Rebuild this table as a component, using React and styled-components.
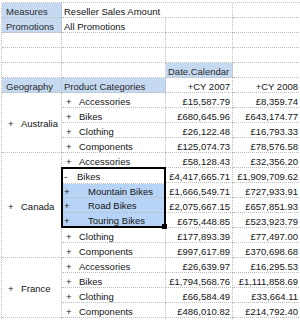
import React from "react";
import styled, { createGlobalStyle } from "styled-components";

const LINE = "#bdbdbd";
const HEAD = "#c5d9f1";
const SEL = "#b7d3f5";

const GlobalStyle = createGlobalStyle`
  html, body { margin: 0; padding: 0; background: #fff; }
  body { font-family: "Liberation Sans", Arial, sans-serif; }
`;

const Sheet = styled.div`
  display: grid;
  grid-template-columns: 60px 104px 67px 68px;
  grid-auto-rows: 15px;
  margin: 2px 0 0 1px;
  border-top: 1px dotted ${LINE};
  border-left: 1px dotted ${LINE};
  font-size: 9.5px;
  color: #141414;
  background: #fff;
`;

const Cell = styled.div`
  box-sizing: border-box;
  display: flex;
  align-items: center;
  justify-content: ${(p) => (p.$right ? "flex-end" : "flex-start")};
  padding: 2px ${(p) => (p.$right ? 2 : 0)}px 0 ${(p) => p.$pad ?? 2}px;
  border-right: ${(p) => (p.$noRight ? "1px solid transparent" : `1px dotted ${LINE}`)};
  border-bottom: 1px dotted ${LINE};
  background: ${(p) => p.$fill || "transparent"};
  color: ${(p) => (p.$head ? "#2a2a2a" : "#141414")};
  white-space: nowrap;
  overflow: ${(p) => (p.$spill ? "visible" : "hidden")};
  grid-row: ${(p) => (p.$span ? `span ${p.$span}` : "auto")};
`;

const Toggle = styled.span`
  display: inline-block;
  flex: none;
  width: ${(p) => p.$w}px;
`;

const Selection = styled.div`
  position: relative;
  grid-row: span 4;
  margin: -1px 0 0 -1px;
  border: 2px solid #000;
  display: flex;
  flex-direction: column;
  background: #fff;
`;

const SelRow = styled.div`
  flex: 1;
  display: flex;
  align-items: center;
  padding: 2px 0 0 1px;
  white-space: nowrap;
  overflow: hidden;
  background: ${(p) => (p.$fill ? SEL : "#fff")};
  border-bottom: ${(p) => (p.$last ? "none" : `1px dotted ${LINE}`)};
`;

const Handle = styled.span`
  position: absolute;
  right: -4px;
  bottom: -4px;
  width: 5px;
  height: 5px;
  background: #000;
  border: 1px solid #fff;
  border-width: 0 1px 1px 0;
`;

const gbp = (v) => "\u00a3" + v;

const data = [
  {
    geo: "Australia",
    rows: [
      ["Accessories", "15,587.79", "8,359.74"],
      ["Bikes", "680,645.96", "643,174.77"],
      ["Clothing", "26,122.48", "16,793.33"],
      ["Components", "125,074.73", "78,576.58"],
    ],
  },
  {
    geo: "Canada",
    rows: [
      ["Accessories", "58,128.43", "32,356.20"],
      ["Bikes", "4,417,665.71", "1,909,709.62", "open"],
      ["Mountain Bikes", "1,666,549.71", "727,933.91", "child"],
      ["Road Bikes", "2,075,667.15", "657,851.93", "child"],
      ["Touring Bikes", "675,448.85", "523,923.79", "child"],
      ["Clothing", "177,893.39", "77,497.00"],
      ["Components", "997,617.89", "370,698.68"],
    ],
  },
  {
    geo: "France",
    rows: [
      ["Accessories", "26,639.97", "16,295.53"],
      ["Bikes", "1,794,568.76", "1,111,858.69"],
      ["Clothing", "66,584.49", "33,664.11"],
      ["Components", "486,010.82", "214,792.40"],
    ],
  },
];

const Values = ({ a, b }) => (
  <>
    <Cell $right>{gbp(a)}</Cell>
    <Cell $right>{gbp(b)}</Cell>
  </>
);

const Empty = ({ n }) =>
  Array.from({ length: n }, (_, i) => <Cell key={i} />);

function Group({ geo, rows }) {
  const out = [
    <Cell key="geo" $span={rows.length} $pad={6}>
      <Toggle $w={13}>+</Toggle>
      {geo}
    </Cell>,
  ];
  let i = 0;
  while (i < rows.length) {
    const [name, a, b, kind] = rows[i];
    if (kind === "open") {
      const kids = rows.slice(i + 1).filter((r) => r[3] === "child");
      out.push(
        <Selection key={"sel" + i}>
          <SelRow>
            <Toggle $w={13}>-</Toggle>
            {name}
          </SelRow>
          {kids.map((k, j) => (
            <SelRow key={k[0]} $fill $last={j === kids.length - 1}>
              <Toggle $w={24}>+</Toggle>
              {k[0]}
            </SelRow>
          ))}
          <Handle />
        </Selection>
      );
      out.push(<Values key={"v" + i} a={a} b={b} />);
      kids.forEach((k) => out.push(<Values key={"v" + k[0]} a={k[1]} b={k[2]} />));
      i += 1 + kids.length;
    } else {
      out.push(
        <Cell key={"n" + i} $pad={4}>
          <Toggle $w={13}>+</Toggle>
          {name}
        </Cell>
      );
      out.push(<Values key={"v" + i} a={a} b={b} />);
      i += 1;
    }
  }
  return out;
}

export default function App() {
  return (
    <>
      <GlobalStyle />
      <Sheet>
        <Cell $fill={HEAD} $head $pad={4}>Measures</Cell>
        <Cell $spill $noRight>Reseller Sales Amount</Cell>
        <Empty n={2} />

        <Cell $fill={HEAD} $head $pad={4}>Promotions</Cell>
        <Cell>All Promotions</Cell>
        <Empty n={2} />

        <Empty n={8} />

        <Empty n={2} />
        <Cell $fill={HEAD} $head>Date.Calendar</Cell>
        <Cell />

        <Cell $fill={HEAD} $head $pad={4}>Geography</Cell>
        <Cell $fill={HEAD} $head>Product Categories</Cell>
        <Cell $right>+CY 2007</Cell>
        <Cell $right>+CY 2008</Cell>

        {data.map((g) => (
          <Group key={g.geo} {...g} />
        ))}

        <Empty n={4} />
      </Sheet>
    </>
  );
}
